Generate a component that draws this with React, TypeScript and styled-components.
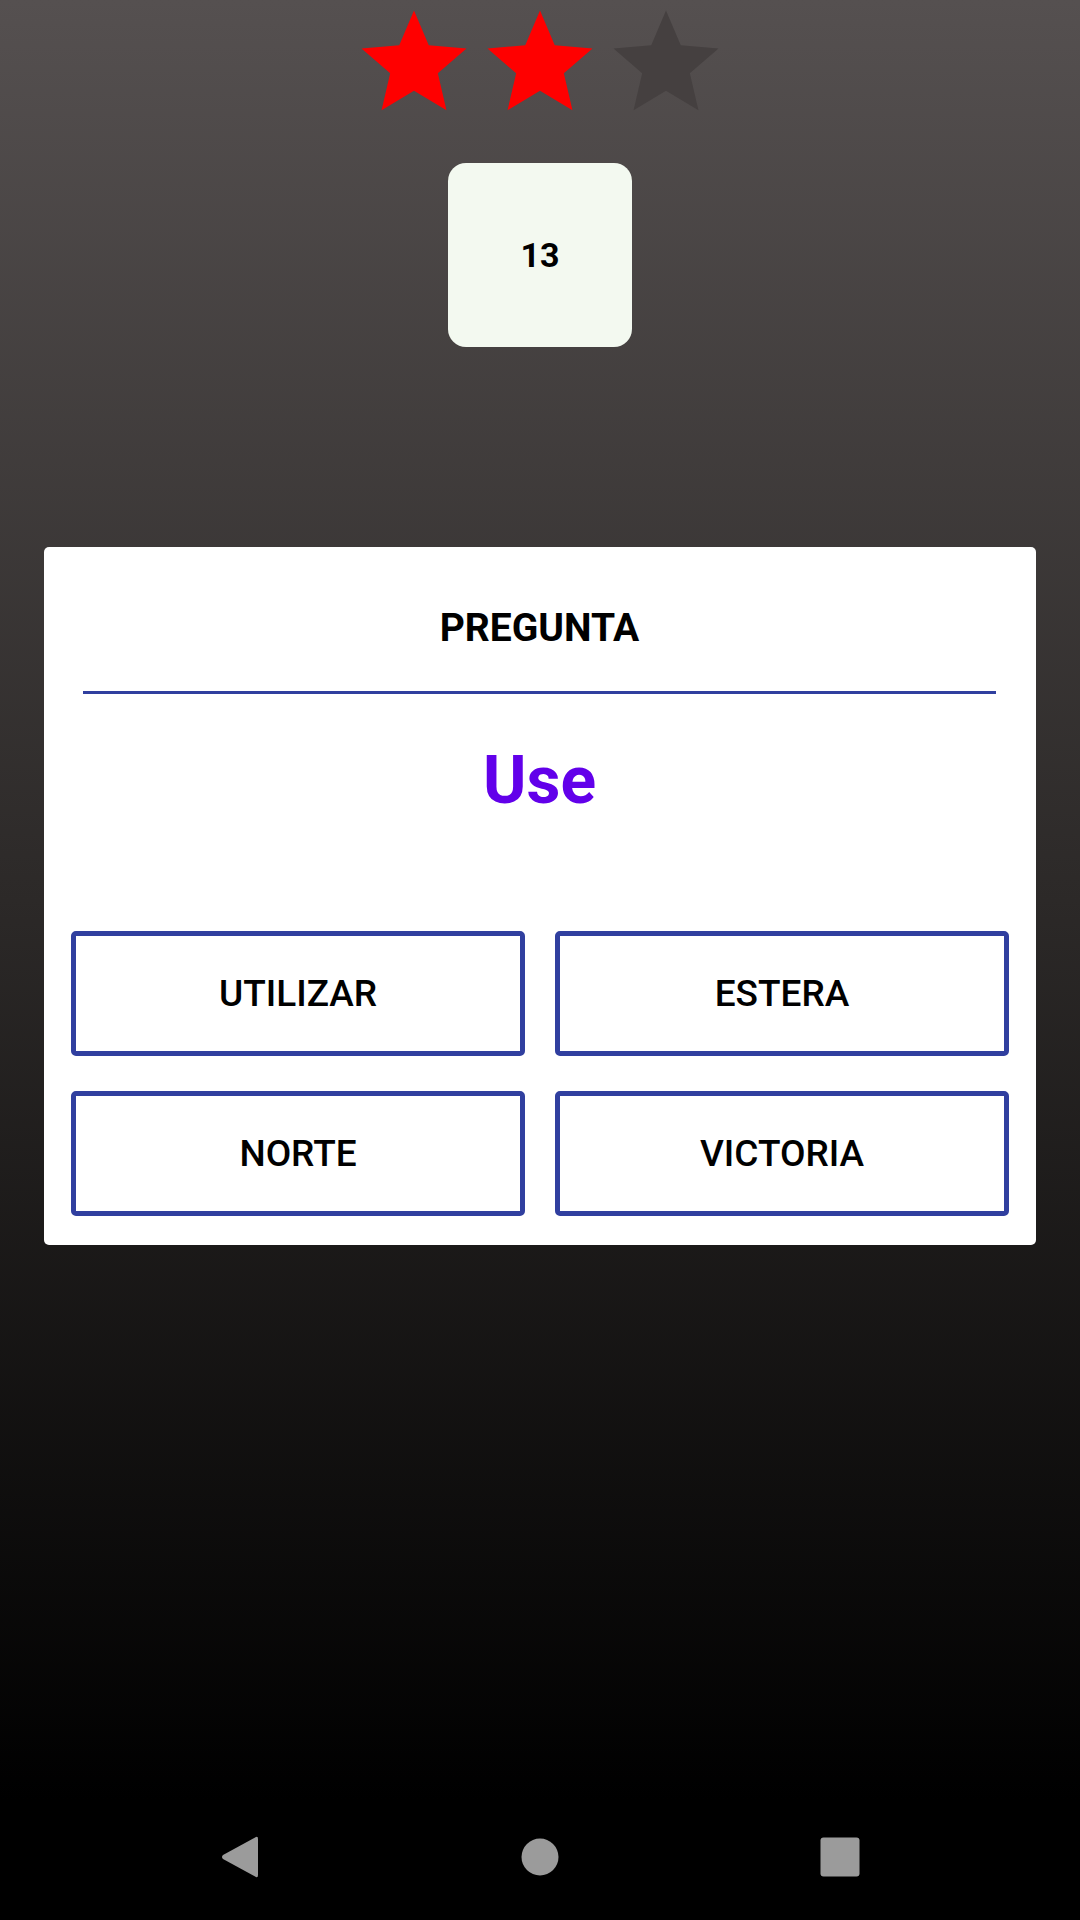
import React from "react";
import styled, { createGlobalStyle } from "styled-components";

const Global = createGlobalStyle`
  html, body { margin: 0; padding: 0; }
  body {
    width: 1080px;
    height: 1920px;
    overflow: hidden;
    font-family: Roboto, "Liberation Sans", sans-serif;
  }
`;

const Screen = styled.div`
  width: 1080px;
  height: 1920px;
  display: flex;
  flex-direction: column;
  align-items: center;
  background: linear-gradient(180deg, #555050 0px, #2c2928 900px, #000000 1800px, #000000 1920px);
`;

const StarRow = styled.div`
  display: flex;
  height: 126px;
`;

const StarIcon = styled.svg<{ $on: boolean }>`
  width: 126px;
  height: 126px;
  display: block;
  fill: ${(p) => (p.$on ? "#ff0000" : "#454040")};
`;

const Counter = styled.div`
  margin-top: 37px;
  width: 184px;
  height: 184px;
  border-radius: 18px;
  background: #f3f9f0;
  display: flex;
  align-items: center;
  justify-content: center;
  font-size: 34px;
  font-weight: 700;
  color: #000;
`;

const Card = styled.div`
  margin-top: 200px;
  width: 992px;
  height: 698px;
  box-sizing: border-box;
  background: #ffffff;
  border-radius: 5px;
  padding: 57px 28px 0 27px;
  display: flex;
  flex-direction: column;
`;

const Title = styled.div`
  font-size: 39px;
  line-height: 48px;
  font-weight: 700;
  color: #000;
  text-align: center;
`;

const Divider = styled.div`
  margin: 39px 12px 0 12px;
  height: 3px;
  background: #303f9f;
`;

const Word = styled.div`
  margin-top: 45px;
  font-size: 66px;
  line-height: 84px;
  font-weight: 700;
  color: #6200ea;
  text-align: center;
`;

const Options = styled.div`
  margin-top: 108px;
  display: grid;
  grid-template-columns: 454px 454px;
  column-gap: 30px;
  row-gap: 35px;
`;

const Option = styled.div`
  height: 125px;
  box-sizing: border-box;
  border: 5px solid #303f9f;
  border-radius: 5px;
  display: flex;
  align-items: center;
  justify-content: center;
  font-size: 37px;
  font-weight: 500;
  color: #000;
`;

const Spacer = styled.div`
  flex: 1;
`;

const NavBar = styled.div`
  width: 1080px;
  height: 132px;
  box-sizing: border-box;
  padding-top: 6px;
  display: flex;
  align-items: center;
  justify-content: center;
`;

const NavSlot = styled.div`
  width: 300px;
  display: flex;
  justify-content: center;
  align-items: center;
`;

const NavIcon = styled.svg`
  display: block;
  fill: #9b9b9b;
`;

const STAR = "M12 17.27L18.18 21l-1.64-7.03L22 9.24l-7.19-.61L12 2 9.19 8.63 2 9.24l5.46 4.73L5.82 21z";

const Star = ({ on }: { on: boolean }) => (
  <StarIcon $on={on} viewBox="0 0 24 24">
    <path d={STAR} />
  </StarIcon>
);

const options = ["UTILIZAR", "ESTERA", "NORTE", "VICTORIA"];

export default function App() {
  return (
    <>
      <Global />
      <Screen>
        <StarRow>
          <Star on />
          <Star on />
          <Star on={false} />
        </StarRow>
        <Counter>13</Counter>
        <Card>
          <Title>PREGUNTA</Title>
          <Divider />
          <Word>Use</Word>
          <Options>
            {options.map((o) => (
              <Option key={o}>{o}</Option>
            ))}
          </Options>
        </Card>
        <Spacer />
        <NavBar>
          <NavSlot>
            <NavIcon width="40" height="44" viewBox="0 0 40 44">
              <path d="M36 2 Q38 1 38 4 L38 40 Q38 43 36 42 L3 24 Q1 22 3 20 Z" />
            </NavIcon>
          </NavSlot>
          <NavSlot>
            <NavIcon width="38" height="38" viewBox="0 0 38 38">
              <circle cx="19" cy="19" r="18.5" />
            </NavIcon>
          </NavSlot>
          <NavSlot>
            <NavIcon width="40" height="40" viewBox="0 0 40 40">
              <rect x="0.5" y="0.5" width="39" height="39" rx="3" />
            </NavIcon>
          </NavSlot>
        </NavBar>
      </Screen>
    </>
  );
}
